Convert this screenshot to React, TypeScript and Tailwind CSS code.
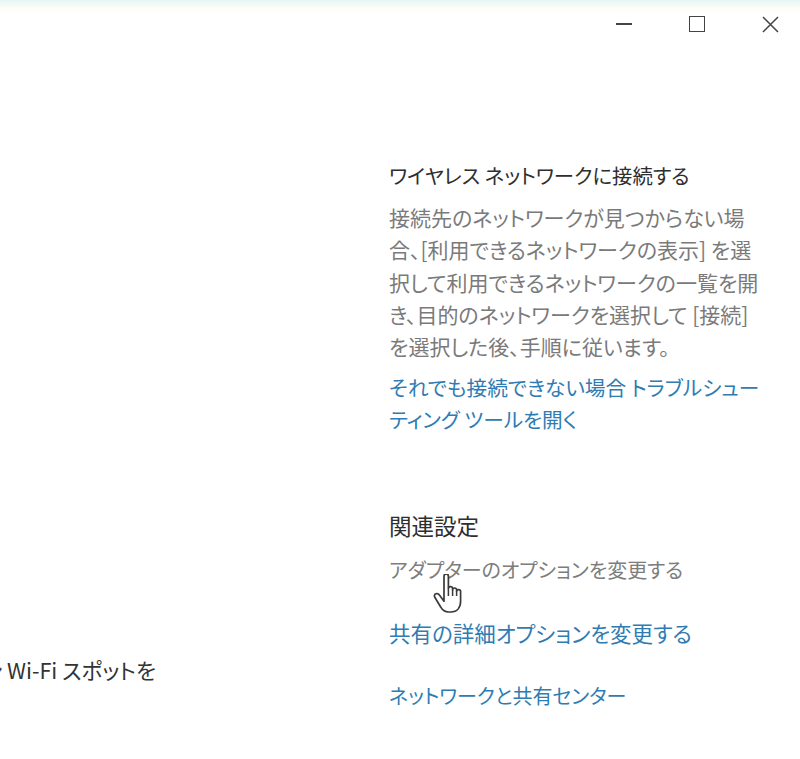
import React from "react";

const HandCursor = () => (
  <svg width="32" height="40" viewBox="0 0 16 20" className="absolute left-[432px] top-[574px]">
    <path
      d="M6 1.2 C6 0.5 6.5 0 7.1 0 C7.7 0 8.2 0.5 8.2 1.2 V7.3 C8.2 6.7 8.7 6.3 9.2 6.3 C9.8 6.3 10.3 6.7 10.3 7.3 V8 C10.3 7.4 10.8 7 11.3 7 C11.9 7 12.3 7.4 12.3 8 V8.8 C12.3 8.2 12.8 7.8 13.3 7.8 C13.9 7.8 14.3 8.2 14.3 8.8 V13.5 C14.3 16.8 12.5 19 9.5 19 H8.3 C6.4 19 5.3 18.2 4.4 16.6 L1.4 11.6 C1 10.9 1.2 10.2 1.9 9.9 C2.6 9.6 3.3 9.9 3.7 10.5 L6 13.6 Z"
      fill="white"
      stroke="#3a3a3a"
      strokeWidth="0.85"
      strokeLinejoin="round"
    />
    <path d="M8.2 7.3 V11 M10.3 8 V11 M12.3 8.8 V11" stroke="#3a3a3a" strokeWidth="0.75" fill="none" />
  </svg>
);

export default function App() {
  const jp = "font-['Noto_Sans_CJK_JP','Noto_Sans',sans-serif] [font-feature-settings:'palt']";
  return (
    <div className={`relative w-[800px] h-[759px] overflow-hidden bg-white ${jp}`}>
      {/* title bar */}
      <div className="h-[48px] flex items-center justify-end bg-linear-to-b from-[#e4f6f5] from-0% via-[#fcfdf8] via-[16%] to-white to-[30%]">
        <div className="flex items-center mr-[-6px]">
          <div className="w-[72px] h-[48px] flex items-center justify-center">
            <div className="w-[16px] h-[1.5px] bg-[#444]" />
          </div>
          <div className="w-[74px] h-[48px] flex items-center justify-center">
            <div className="w-[16px] h-[16px] border-[1.5px] border-[#444]" />
          </div>
          <div className="w-[72px] h-[48px] flex items-center justify-center">
            <svg width="17" height="17" viewBox="0 0 17 17">
              <path d="M1 1 L16 16 M16 1 L1 16" stroke="#444" strokeWidth="1.5" />
            </svg>
          </div>
        </div>
      </div>

      <div className="flex">
        {/* left column */}
        <div className="w-[389px] pt-[606px]">
          <div className="ml-[-17px] text-[21.6px] leading-[32px] text-[#333] whitespace-nowrap">
            ン Wi-Fi スポットを
          </div>
        </div>

        {/* right column */}
        <div className="w-[400px] pt-[111px]">
          <div className="text-[20.4px] leading-[32px] text-[#2e2e2e] whitespace-nowrap">
            ワイヤレス ネットワークに接続する
          </div>
          <div className="mt-[10px] text-[21px] leading-[32.3px] text-[#7a7a7a] whitespace-nowrap">
            <div>接続先のネットワークが見つからない場</div>
            <div>合、[利用できるネットワークの表示] を選</div>
            <div>択して利用できるネットワークの一覧を開</div>
            <div>き、目的のネットワークを選択して [接続]</div>
            <div>を選択した後、手順に従います。</div>
          </div>
          <div className="mt-[9px] text-[20.7px] leading-[32px] text-[#2f7cb3] whitespace-nowrap">
            <div>それでも接続できない場合 トラブルシュー</div>
            <div>ティング ツールを開く</div>
          </div>

          <div className="mt-[74px] text-[22.5px] leading-[32px] text-[#2e2e2e] whitespace-nowrap">関連設定</div>
          <div className="mt-[13px] text-[20px] leading-[32px] text-[#7d7d7d] whitespace-nowrap">
            アダプターのオプションを変更する
          </div>
          <div className="mt-[31px] text-[21.5px] leading-[32px] text-[#2f7cb3] whitespace-nowrap">
            共有の詳細オプションを変更する
          </div>
          <div className="mt-[31px] text-[20px] leading-[32px] text-[#2f7cb3] whitespace-nowrap">
            ネットワークと共有センター
          </div>
        </div>
      </div>

      <HandCursor />
    </div>
  );
}
